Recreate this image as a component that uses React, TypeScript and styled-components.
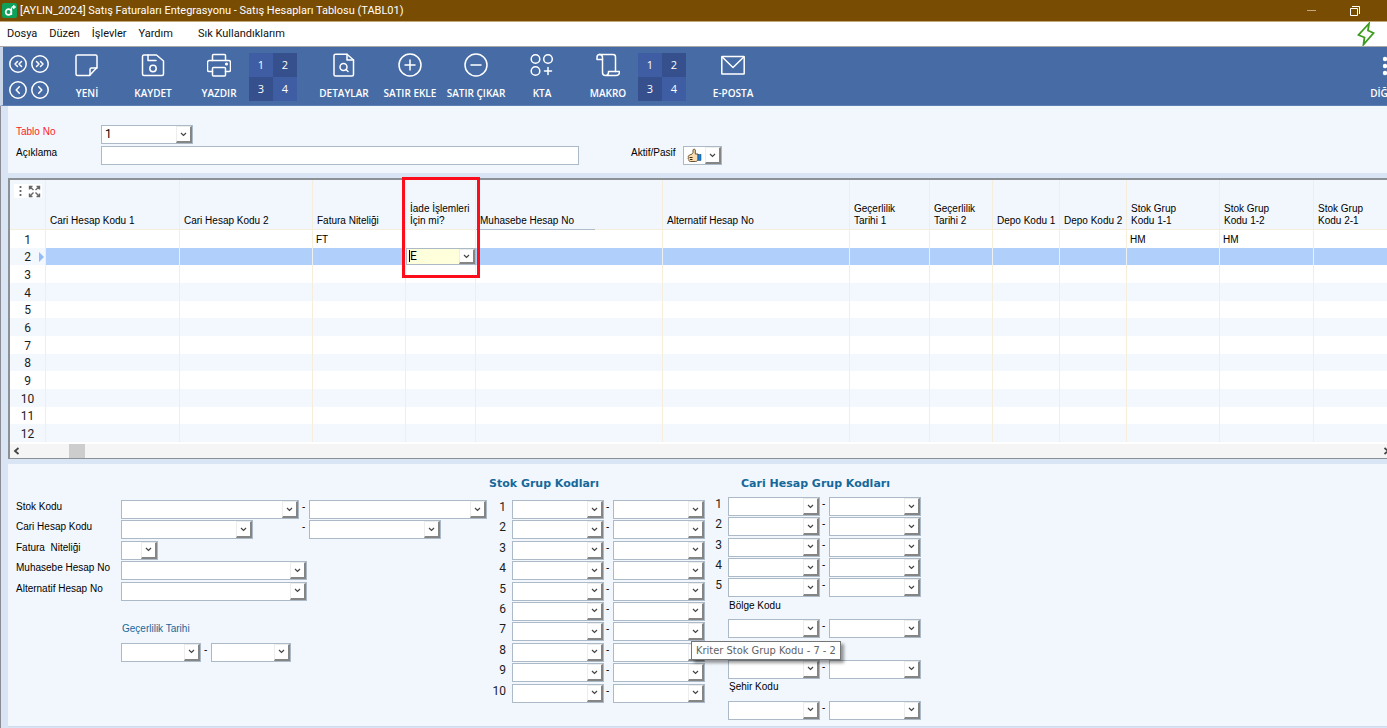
import React, { useId } from 'react';
import styled, { createGlobalStyle, css } from 'styled-components';

const color = {
  caption: '#784c02',
  toolbar: '#476ca5',
  frame: '#d9e4f5',
  panel: '#f2f7fd',
  ink: '#1c1c1c',
  heading: '#15689a',
  field: '#abbac6',
  bevel: '#858585',
  gridLine: '#f4eeda',
  selected: '#b1cffb',
};

const formFont = "'Liberation Sans', Arial, sans-serif";
const digitFont = "Roboto, 'Liberation Sans', sans-serif";
const chromeFont = "'Open Sans', 'Noto Sans', sans-serif";

const GlobalStyle = createGlobalStyle`
  *, *::before, *::after { box-sizing: border-box; }
  body {
    margin: 0;
    background: ${color.frame};
    color: #000;
    font: 10px/14px ${formFont};
  }
  button, input, select { font: inherit; color: inherit; }
`;

const Window = styled.div`
  min-height: 100vh;
  display: flex;
  flex-direction: column;
  overflow-x: clip;
`;

/* ---------- caption and menu ---------- */

const Caption = styled.header`
  display: flex;
  align-items: center;
  height: 22px;
  padding: 0 27px 0 2px;
  background: ${color.caption};
  border-bottom: 1px solid #c4a877;
  color: #fff;
  font: 11px/20px ${digitFont};
`;

const AppTitle = styled.h1`
  flex: 1;
  margin: 0 0 0 3px;
  font: inherit;
  white-space: nowrap;
`;

const CaptionButton = styled.button`
  display: flex;
  padding: 0;
  margin-left: 33px;
  border: 0;
  background: none;
`;

const MenuBar = styled.nav`
  display: flex;
  align-items: center;
  gap: 12px;
  height: 25px;
  padding: 0 12px 0 7px;
  background: #fff;
  border-bottom: 1px solid #a9a9a9;
  font: 11px/16px ${digitFont};
`;

const MenuItem = styled.button<{ $apart?: boolean }>`
  padding: 0;
  margin-left: ${(p) => (p.$apart ? '13px' : '0')};
  border: 0;
  background: none;
  color: #111;
  white-space: nowrap;
`;

const BoltButton = styled.button`
  display: flex;
  margin-left: auto;
  padding: 0;
  border: 0;
  background: none;
`;

/* ---------- toolbar ---------- */

const Toolbar = styled.div`
  display: flex;
  align-items: flex-start;
  height: 59px;
  padding: 6px 0 0 6px;
  border-left: 3px solid #c9d6ea;
  border-bottom: 1px solid #5d7fb4;
  background: ${color.toolbar};
  color: #fff;
  overflow: clip;
`;

const NavPad = styled.div`
  display: grid;
  grid-template-columns: repeat(2, 18px);
  gap: 8px 4px;
  padding-top: 2px;
  margin-right: 8px;
`;

const NavButton = styled.button`
  display: flex;
  padding: 0;
  border: 0;
  background: none;
`;

const ToolGroup = styled.div`
  display: flex;
  gap: 6px;
`;

const Tool = styled.button`
  display: flex;
  flex-direction: column;
  align-items: center;
  gap: 8px;
  width: 60px;
  padding: 0;
  border: 0;
  background: none;
  font: 600 10px/16px ${chromeFont};
  white-space: nowrap;
`;

const OverflowTool = styled(Tool)`
  margin: 0 -28px 0 auto;
`;

const NumberPad = styled.div`
  display: grid;
  grid-template-columns: repeat(2, 24px);
  margin-right: 17px;
`;

const NumberKey = styled.button<{ $dark: boolean }>`
  height: 24px;
  padding: 0;
  border: 0;
  background: ${(p) => (p.$dark ? '#35508c' : '#3f5da3')};
  font: 11px/22px ${chromeFont};
`;

/* ---------- shared form parts ---------- */

const Field = styled.span<{ $width: number; $inCell?: boolean }>`
  position: relative;
  display: inline-flex;
  flex: none;
  width: ${(p) => p.$width}px;
  height: ${(p) => (p.$inCell ? 17 : 19)}px;
  border: 1px solid ${color.field};
  background: ${(p) => (p.$inCell ? '#ffffdc' : '#fff')};
`;

const Select = styled.select`
  appearance: none;
  flex: 1;
  min-width: 0;
  padding: 0 18px 2px 3px;
  border: 0;
  outline: 0;
  background: none;
  font: 12px/14px ${digitFont};
`;

const DropArrow = styled.span`
  position: absolute;
  top: 0;
  right: 0;
  bottom: 0;
  display: flex;
  align-items: center;
  justify-content: center;
  width: 16px;
  border: 1px solid #ededed;
  border-right: 2px solid ${color.bevel};
  border-bottom: 2px solid ${color.bevel};
  background: #fff;
  pointer-events: none;
`;

const FieldIcon = styled.span`
  position: absolute;
  top: 1px;
  left: 3px;
  display: flex;
  pointer-events: none;
`;

const Caret = styled.span`
  position: absolute;
  top: 1px;
  left: 2px;
  width: 1px;
  height: 12px;
  background: #000;
`;

const Tooltip = styled.span`
  position: absolute;
  z-index: 3;
  top: 18px;
  left: 77px;
  padding: 0 4px;
  border: 1px solid #767676;
  background: #fff;
  box-shadow: 3px 3px 3px rgba(0, 0, 0, 0.4);
  color: #626262;
  font: 11px/17px 'DejaVu Sans Condensed', ${chromeFont};
  white-space: nowrap;
`;

const TextField = styled.input`
  width: 478px;
  height: 19px;
  padding: 0 3px;
  border: 1px solid ${color.field};
  background: #fff;
`;

const Label = styled.label`
  white-space: pre;
`;

/* ---------- record header ---------- */

const Content = styled.main`
  flex: 1;
  display: flex;
  flex-direction: column;
  gap: 5px;
  padding: 0 0 1px 7px;
  border-left: 1px solid #8b8b93;
`;

const RecordPanel = styled.section`
  display: grid;
  grid-template-columns: 85px 530px 52px auto;
  grid-auto-rows: 20px;
  gap: 1px 0;
  justify-content: start;
  align-items: start;
  padding: 19px 0 7px 8px;
  background: ${color.panel};
`;

const RecordLabel = styled(Label)<{ $column: number; $required?: boolean }>`
  grid-column: ${(p) => p.$column};
  color: ${(p) => (p.$required ? '#ff1a1f' : 'inherit')};
`;

const RecordField = styled.span<{ $column: number }>`
  display: flex;
  grid-column: ${(p) => p.$column};
`;

/* ---------- data grid ---------- */

const GridPanel = styled.section`
  border: solid #8c9196;
  border-width: 2px 0 1px 2px;
  background: #fff;
`;

const DataTable = styled.table`
  width: 100%;
  table-layout: fixed;
  border-collapse: separate;
  border-spacing: 0;
`;

const HeadCell = styled.th<{ $underlined?: boolean }>`
  position: relative;
  height: 50px;
  padding: 0 0 2px 4px;
  border-right: 1px solid ${color.gridLine};
  border-bottom: 1px solid ${color.gridLine};
  background: ${color.panel};
  font-weight: 400;
  line-height: 12px;
  text-align: left;
  vertical-align: bottom;
  white-space: pre;

  &:last-child {
    border-right: 0;
  }

  ${(p) =>
    p.$underlined &&
    css`
      &::after {
        content: '';
        position: absolute;
        left: 0;
        bottom: -1px;
        width: 119px;
        height: 1px;
        background: #aebccb;
      }
    `}
`;

const CornerCell = styled(HeadCell)`
  padding: 4px 3px 0 4px;
  vertical-align: top;
`;

const CornerTools = styled.span`
  display: flex;
  align-items: center;
  background: #fff;
`;

const Highlight = styled.span`
  position: absolute;
  z-index: 2;
  top: -3px;
  left: -4px;
  width: 78px;
  height: 101px;
  border: 3px solid #fb0d1b;
  pointer-events: none;
`;

const Cell = styled.td`
  padding: 1px 0 0 3px;
  border-right: 1px solid ${color.gridLine};
  line-height: 16px;
  white-space: nowrap;

  &:last-child {
    border-right: 0;
  }
`;

const EditCell = styled(Cell)`
  padding: 0;
  vertical-align: top;
  line-height: 0;
`;

const RowHead = styled.th`
  position: relative;
  padding: 1px 0 0;
  border-right: 1px solid ${color.gridLine};
  color: ${color.ink};
  font: 12px/16px ${digitFont};
`;

const Pointer = styled.span`
  position: absolute;
  top: 4px;
  right: 1px;
  border: solid transparent;
  border-width: 5px 0 5px 5px;
  border-left-color: #93bbf7;
`;

const Row = styled.tr<{ $selected: boolean }>`
  height: 18px;

  &:nth-child(3n + 2) {
    height: 17px;
  }
  &:nth-child(even) {
    background: #f3f7fe;
  }
  ${(p) =>
    p.$selected &&
    css`
      td {
        background: ${color.selected};
        border-right-color: #eef1f2;
      }
    `}
`;

const ScrollTrack = styled.div`
  display: flex;
  align-items: center;
  height: 14px;
  margin-top: 2px;
  padding-left: 3px;
  background: #f5f5f5;
  overflow: clip;
`;

const ScrollThumb = styled.span`
  width: 16px;
  height: 14px;
  margin: 0 auto 0 49px;
  background: #cdcdcd;
`;

const ScrollButton = styled.button<{ $end?: boolean }>`
  display: flex;
  padding: 0;
  margin-right: ${(p) => (p.$end ? '-3px' : '0')};
  border: 0;
  background: none;
`;

/* ---------- criteria ---------- */

const CriteriaPanel = styled.section`
  flex: 1;
  display: flex;
  align-items: flex-start;
  padding: 13px 0 3px 8px;
  border-bottom: 1px solid #cfdbec;
  background: ${color.panel};
`;

const Criteria = styled.div<{ $width: number; $top?: number }>`
  flex: none;
  width: ${(p) => p.$width}px;
  padding-top: ${(p) => p.$top ?? 0}px;
`;

const CriteriaTitle = styled.h2<{ $indent: number; $below: number }>`
  margin: 0 0 ${(p) => p.$below}px ${(p) => p.$indent}px;
  color: ${color.heading};
  font: bold 11px/14px 'DejaVu Sans', sans-serif;
  white-space: nowrap;
`;

const Lines = styled.div<{ $count: number; $height: number }>`
  display: grid;
  grid-template-rows: repeat(${(p) => p.$count}, 1fr);
  height: ${(p) => p.$height}px;
`;

const Line = styled.div<{ $labelWidth: number }>`
  display: grid;
  grid-template-columns: ${(p) => p.$labelWidth}px auto;
  justify-content: start;
  align-items: start;
  min-height: 0;
`;

const Pair = styled.span`
  display: flex;
  grid-column: 2;
`;

const Slot = styled.span<{ $width: number }>`
  display: flex;
  justify-content: space-between;
  width: ${(p) => p.$width}px;
`;

const Dash = styled.span`
  width: 7px;
`;

const Index = styled.span`
  padding-right: 6px;
  color: ${color.ink};
  font: 12px/14px ${digitFont};
  text-align: right;
`;

const SubTitle = styled.span<{ $accent?: boolean }>`
  grid-column: 2;
  padding-left: 1px;
  color: ${(p) => (p.$accent ? color.heading : 'inherit')};
`;

/* ---------- icons ---------- */

const Glyph = ({ children, size = 24 }: { children: React.ReactNode; size?: number }) => (
  <svg
    width={size}
    height={size}
    viewBox={`0 0 ${size} ${size}`}
    fill="none"
    stroke="#fff"
    strokeWidth="1.5"
    strokeLinejoin="round"
    strokeLinecap="round"
    aria-hidden="true"
  >
    {children}
  </svg>
);

const navPaths: Record<string, string> = {
  'İlk kayıt': 'M8.5 6.5 6 9l2.5 2.5M12.5 6.5 10 9l2.5 2.5',
  'Son kayıt': 'M5.5 6.5 8 9l-2.5 2.5M9.5 6.5 12 9l-2.5 2.5',
  'Önceki kayıt': 'M10.3 5.8 7.2 9l3.1 3.2',
  'Sonraki kayıt': 'M7.7 5.8 10.8 9l-3.1 3.2',
};

const icons = {
  yeni: (
    <Glyph>
      <path d="M2.5 2h18a1.5 1.5 0 0 1 1.5 1.5v11L14.500 22.500H2.500A1.500 1.500 0 0 1 1 21V3.500A1.500 1.500 0 0 1 2.500 2Z" />
      <path d="M22 15h-5.500a1.500 1.500 0 0 0-1.500 1.500V22" />
    </Glyph>
  ),
  kaydet: (
    <Glyph>
      <path d="M3 2h12.500L22.500 8v13a1.500 1.500 0 0 1-1.500 1.500H3A1.500 1.500 0 0 1 1.500 21V3.500A1.500 1.500 0 0 1 3 2Z" />
      <path d="M7 2v5.500h8" />
      <circle cx="12" cy="15.500" r="3.200" />
    </Glyph>
  ),
  yazdir: (
    <Glyph>
      <path d="M5.500 7.500V2.500a1 1 0 0 1 1-1h11a1 1 0 0 1 1 1v5" />
      <path d="M5.500 18.500H2a1.500 1.500 0 0 1-1.500-1.500V9.500A2 2 0 0 1 2.500 7.500h19a2 2 0 0 1 2 2V17a1.500 1.500 0 0 1-1.500 1.500h-3.500" />
      <rect x="5.500" y="14.500" width="13" height="8.500" rx="1" />
      <circle cx="19.500" cy="11" r="0.800" fill="#fff" />
    </Glyph>
  ),
  detaylar: (
    <Glyph>
      <path d="M3.500 1.200h11.500L21.500 7v14.500A1.500 1.500 0 0 1 20 23H3.500A1.500 1.500 0 0 1 2 21.500V2.700A1.500 1.500 0 0 1 3.500 1.200Z" />
      <path d="M15 1.200V7h6.500" />
      <circle cx="11.500" cy="14" r="3.500" />
      <path d="m14 16.500 2 2" />
    </Glyph>
  ),
  ekle: (
    <Glyph>
      <circle cx="12" cy="12" r="11" />
      <path d="M7 12h10M12 7v10" />
    </Glyph>
  ),
  cikar: (
    <Glyph>
      <circle cx="12" cy="12" r="11" />
      <path d="M7 12h10" />
    </Glyph>
  ),
  kta: (
    <Glyph>
      <circle cx="5.500" cy="6" r="4.300" />
      <circle cx="18" cy="6" r="4.300" />
      <circle cx="5.500" cy="18" r="4.300" />
      <path d="M18 14.500v7M14.500 18h7" />
    </Glyph>
  ),
  makro: (
    <Glyph>
      <path d="M3.500 1.500H17a2.500 2.500 0 0 1 2.500 2.500v14.500" />
      <path d="M3.500 1.500C2 1.500 1 2.500 1 4.500v2h5.500" />
      <path d="M3.500 1.500c2 0 3 1 3 3V19.500a3 3 0 0 0 3 3h10.500c2 0 3.500-1 3.500-4H12.500c0 2.500-.800 4-3 4" />
    </Glyph>
  ),
  eposta: (
    <Glyph>
      <rect x="0.800" y="3.500" width="22.400" height="17.500" rx="0.500" />
      <path d="m1.200 4 10.800 10.500L22.800 4" />
    </Glyph>
  ),
};

const Arrow = ({ d }: { d: string }) => (
  <svg width="7" height="8" viewBox="0 0 7 8" fill="none" stroke="#444" strokeWidth="1.800" aria-hidden="true">
    <path d={d} />
  </svg>
);

const ThumbIcon = () => (
  <svg width="15" height="15" viewBox="0 0 15 15" aria-hidden="true">
    <path
      d="M4.500 6.500 6 4.500V2c.300-1.200 2-1.200 2.300 0v4H11v6c-.700 1-1.500 1.500-2.500 1.500H3.500c-1.500 0-2-1-1.500-2-1-.500-1.200-1.500-.500-2.200C1 8.500 1.300 7.500 2.300 7.300c.300-.500 1.200-.800 2.200-.800Z"
      fill="#fbdcae"
      stroke="#5a4322"
      strokeWidth="0.900"
    />
    <path d="M2.500 9.500h3M3 11.500h2.500" stroke="#3a2c14" />
    <rect x="11" y="6.500" width="3" height="6" fill="#1b7fd6" stroke="#14406e" strokeWidth="0.500" />
  </svg>
);

/* ---------- composed controls ---------- */

type ComboProps = {
  width: number;
  label: string;
  id?: string;
  value?: string;
  icon?: React.ReactNode;
  inCell?: boolean;
  tip?: string;
};

const Combo = ({ width, label, id, value = '', icon, inCell, tip }: ComboProps) => (
  <Field $width={width} $inCell={inCell}>
    <Select id={id} aria-label={label} defaultValue={value}>
      <option value={value}>{value}</option>
    </Select>
    {icon && <FieldIcon>{icon}</FieldIcon>}
    {inCell && <Caret />}
    <DropArrow>
      <svg width="7" height="5" viewBox="0 0 7 5" fill="none" stroke="#444" strokeWidth="1.200" aria-hidden="true">
        <path d="m1 1 2.500 2.500L6 1" />
      </svg>
    </DropArrow>
    {tip && <Tooltip role="tooltip">{tip}</Tooltip>}
  </Field>
);

const Range = ({ name, width = 92, slot = 101, tip }: { name: string; width?: number; slot?: number; tip?: string }) => (
  <Pair>
    <Slot $width={slot}>
      <Combo width={width} label={`${name} - 1`} />
      <Dash>-</Dash>
    </Slot>
    <Combo width={width} label={`${name} - 2`} tip={tip} />
  </Pair>
);

const Pad = ({ name }: { name: string }) => (
  <NumberPad role="group" aria-label={name}>
    {[1, 2, 3, 4].map((n) => (
      <NumberKey key={n} $dark={n === 2 || n === 3}>
        {n}
      </NumberKey>
    ))}
  </NumberPad>
);

const columns: { title: string; width?: number }[] = [
  { title: 'Cari Hesap Kodu 1', width: 134 },
  { title: 'Cari Hesap Kodu 2', width: 133 },
  { title: 'Fatura Niteliği', width: 93 },
  { title: 'İade İşlemleri\nİçin mi?', width: 70 },
  { title: 'Muhasebe Hesap No', width: 187 },
  { title: 'Alternatif Hesap No', width: 187 },
  { title: 'Geçerlilik\nTarihi 1', width: 80 },
  { title: 'Geçerlilik\nTarihi 2', width: 63 },
  { title: 'Depo Kodu 1', width: 67 },
  { title: 'Depo Kodu 2', width: 67 },
  { title: 'Stok Grup\nKodu 1-1', width: 93 },
  { title: 'Stok Grup\nKodu 1-2', width: 94 },
  { title: 'Stok Grup\nKodu 2-1' },
];

const returnColumn = 3;
const firstRow: Record<number, string> = { 2: 'FT', 10: 'HM', 11: 'HM' };

const leftTools = [
  { icon: icons.yeni, text: 'YENİ' },
  { icon: icons.kaydet, text: 'KAYDET' },
  { icon: icons.yazdir, text: 'YAZDIR' },
];
const rowTools = [
  { icon: icons.detaylar, text: 'DETAYLAR' },
  { icon: icons.ekle, text: 'SATIR EKLE' },
  { icon: icons.cikar, text: 'SATIR ÇIKAR' },
  { icon: icons.kta, text: 'KTA' },
  { icon: icons.makro, text: 'MAKRO' },
];

const Tools = ({ items }: { items: typeof leftTools }) => (
  <ToolGroup>
    {items.map((t) => (
      <Tool key={t.text}>
        {t.icon}
        {t.text}
      </Tool>
    ))}
  </ToolGroup>
);

export default function App() {
  const id = useId();

  return (
    <Window>
      <GlobalStyle />
      <Caption>
        <svg width="15" height="15" viewBox="0 0 15 15" aria-hidden="true">
          <rect width="15" height="15" rx="2" fill="#0fa15a" />
          <circle cx="6.500" cy="9" r="2.800" fill="none" stroke="#fff" strokeWidth="1.700" />
          <path d="M9.500 4.500V12M11.800 2v4M9.800 4h4" stroke="#fff" strokeWidth="1.300" />
        </svg>
        <AppTitle>[AYLIN_2024] Satış Faturaları Entegrasyonu - Satış Hesapları Tablosu (TABL01)</AppTitle>
        <CaptionButton aria-label="Simge durumuna küçült">
          <svg width="10" height="10" viewBox="0 0 10 10" stroke="#c0a983">
            <path d="M0 4.500h9" />
          </svg>
        </CaptionButton>
        <CaptionButton aria-label="Önceki boyut">
          <svg width="10" height="10" viewBox="0 0 10 10" fill="none" stroke="#fff">
            <path d="M.500 2.500h7v7h-7zM2 .500h7.500V8" />
          </svg>
        </CaptionButton>
      </Caption>

      <MenuBar>
        <MenuItem>Dosya</MenuItem>
        <MenuItem>Düzen</MenuItem>
        <MenuItem>İşlevler</MenuItem>
        <MenuItem>Yardım</MenuItem>
        <MenuItem $apart>Sık Kullandıklarım</MenuItem>
        <BoltButton aria-label="Hızlı erişim">
          <svg width="18" height="24" viewBox="0 0 18 24" fill="none" stroke="#3c9c1d" strokeWidth="1.800">
            <path d="M12 1.500 1.500 13l6 2.500L6.500 22.500 16.500 11l-5.500-2.500Z" />
          </svg>
        </BoltButton>
      </MenuBar>

      <Toolbar role="toolbar">
        <NavPad>
          {Object.entries(navPaths).map(([name, d]) => (
            <NavButton key={name} aria-label={name}>
              <Glyph size={18}>
                <circle cx="9" cy="9" r="8.200" />
                <path d={d} />
              </Glyph>
            </NavButton>
          ))}
        </NavPad>
        <Tools items={leftTools} />
        <Pad name="Yazdırma tasarımları" />
        <Tools items={rowTools} />
        <Pad name="Makrolar" />
        <Tools items={[{ icon: icons.eposta, text: 'E-POSTA' }]} />
        <OverflowTool>
          <Glyph>
            <g fill="#fff" stroke="none">
              <circle cx="12" cy="6" r="2.200" />
              <circle cx="12" cy="13" r="2.200" />
              <circle cx="12" cy="20" r="2.200" />
            </g>
          </Glyph>
          DİĞER
        </OverflowTool>
      </Toolbar>

      <Content>
        <RecordPanel>
          <RecordLabel $column={1} $required htmlFor={`${id}-no`}>
            Tablo No
          </RecordLabel>
          <RecordField $column={2}>
            <Combo width={92} id={`${id}-no`} label="Tablo No" value="1" />
          </RecordField>
          <RecordLabel $column={1} htmlFor={`${id}-desc`}>
            Açıklama
          </RecordLabel>
          <RecordField $column={2}>
            <TextField id={`${id}-desc`} />
          </RecordField>
          <RecordLabel $column={3} htmlFor={`${id}-active`}>
            Aktif/Pasif
          </RecordLabel>
          <RecordField $column={4}>
            <Combo width={39} id={`${id}-active`} label="Aktif/Pasif" icon={<ThumbIcon />} />
          </RecordField>
        </RecordPanel>

        <GridPanel>
          <DataTable>
            <colgroup>
              <col width={36} />
              {columns.map((c) => (
                <col key={c.title} width={c.width} />
              ))}
            </colgroup>
            <thead>
              <tr>
                <CornerCell>
                  <CornerTools>
                    <svg width="28" height="14" viewBox="0 0 28 14" fill="none" stroke="#666" aria-hidden="true">
                      <path d="M6.500 2v2M6.500 6v2M6.500 10v2" strokeWidth="1.800" />
                      <path
                        d="m16 3 3.500 3M25 3l-3.500 3M16 12l3.500-3.500M25 12l-3.500-3.500M15.500 5.500v-3h3M22.500 2.500h3v3M15.500 9.500v3h3M22.500 12.500h3v-3"
                        strokeWidth="1.400"
                      />
                    </svg>
                  </CornerTools>
                </CornerCell>
                {columns.map((c, i) => (
                  <HeadCell key={c.title} scope="col" $underlined={i === returnColumn + 1}>
                    {c.title}
                    {i === returnColumn && <Highlight />}
                  </HeadCell>
                ))}
              </tr>
            </thead>
            <tbody>
              {Array.from({ length: 12 }, (_, r) => (
                <Row key={r} $selected={r === 1}>
                  <RowHead scope="row">
                    {r + 1}
                    {r === 1 && <Pointer />}
                  </RowHead>
                  {columns.map((c, i) =>
                    r === 1 && i === returnColumn ? (
                      <EditCell key={c.title}>
                        <Combo width={70} label="İade İşlemleri İçin mi?" value="E" inCell />
                      </EditCell>
                    ) : (
                      <Cell key={c.title}>{r === 0 ? firstRow[i] : null}</Cell>
                    ),
                  )}
                </Row>
              ))}
            </tbody>
          </DataTable>
          <ScrollTrack>
            <ScrollButton aria-label="Sola kaydır">
              <Arrow d="M5.500 1 2 4l3.500 3" />
            </ScrollButton>
            <ScrollThumb />
            <ScrollButton $end aria-label="Sağa kaydır">
              <Arrow d="M1.500 1 5 4 1.500 7" />
            </ScrollButton>
          </ScrollTrack>
        </GridPanel>

        <CriteriaPanel>
          <Criteria $width={472} $top={23}>
            <Lines $count={10} $height={204}>
              <Line $labelWidth={105}>
                <Label>Stok Kodu</Label>
                <Range name="Stok Kodu" width={178} slot={188} />
              </Line>
              <Line $labelWidth={105}>
                <Label>Cari Hesap Kodu</Label>
                <Range name="Cari Hesap Kodu" width={132} slot={188} />
              </Line>
              <Line $labelWidth={105}>
                <Label htmlFor={`${id}-type`}>{'Fatura  Niteliği'}</Label>
                <Combo width={37} id={`${id}-type`} label="Fatura Niteliği" />
              </Line>
              <Line $labelWidth={105}>
                <Label htmlFor={`${id}-acc`}>Muhasebe Hesap No</Label>
                <Combo width={186} id={`${id}-acc`} label="Muhasebe Hesap No" />
              </Line>
              <Line $labelWidth={105}>
                <Label htmlFor={`${id}-alt`}>Alternatif Hesap No</Label>
                <Combo width={186} id={`${id}-alt`} label="Alternatif Hesap No" />
              </Line>
              <Line $labelWidth={105} />
              <Line $labelWidth={105}>
                <SubTitle $accent>Geçerlilik Tarihi</SubTitle>
              </Line>
              <Line $labelWidth={105}>
                <Range name="Geçerlilik Tarihi" width={80} slot={90} />
              </Line>
            </Lines>
          </Criteria>

          <Criteria $width={226}>
            <CriteriaTitle $indent={1} $below={9}>
              Stok Grup Kodları
            </CriteriaTitle>
            <Lines $count={10} $height={204}>
              {Array.from({ length: 10 }, (_, i) => (
                <Line key={i} $labelWidth={24}>
                  <Index>{i + 1}</Index>
                  <Range
                    name={`Kriter Stok Grup Kodu - ${i + 1}`}
                    tip={i === 6 ? 'Kriter Stok Grup Kodu - 7 - 2' : undefined}
                  />
                </Line>
              ))}
            </Lines>
          </Criteria>

          <Criteria $width={206}>
            <CriteriaTitle $indent={27} $below={6}>
              Cari Hesap Grup Kodları
            </CriteriaTitle>
            <Lines $count={11} $height={224}>
              {[1, 2, 3, 4, 5].map((n) => (
                <Line key={n} $labelWidth={14}>
                  <Index>{n}</Index>
                  <Range name={`Kriter Cari Hesap Grup Kodu - ${n}`} />
                </Line>
              ))}
              <Line $labelWidth={14}>
                <SubTitle>Bölge Kodu</SubTitle>
              </Line>
              <Line $labelWidth={14}>
                <Range name="Bölge Kodu" />
              </Line>
              <Line $labelWidth={14} />
              <Line $labelWidth={14}>
                <Range name="Grup Kodu" />
              </Line>
              <Line $labelWidth={14}>
                <SubTitle>Şehir Kodu</SubTitle>
              </Line>
              <Line $labelWidth={14}>
                <Range name="Şehir Kodu" />
              </Line>
            </Lines>
          </Criteria>
        </CriteriaPanel>
      </Content>
    </Window>
  );
}
